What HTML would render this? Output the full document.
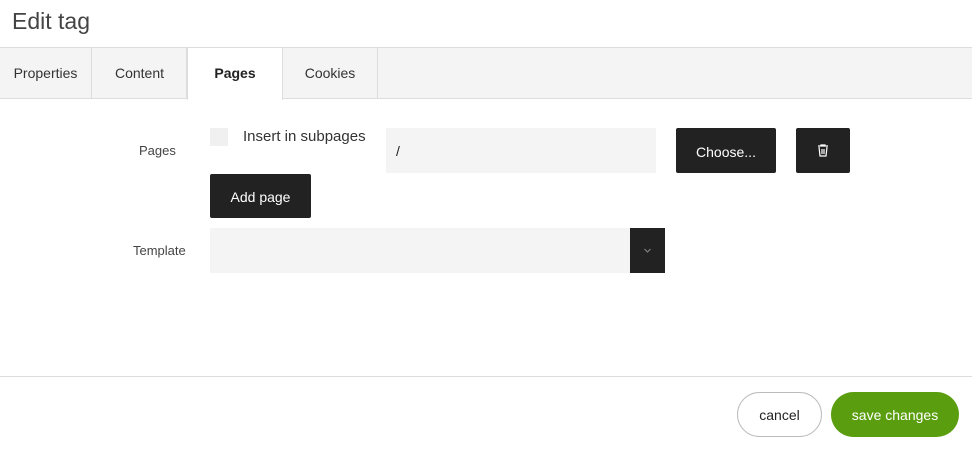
<!DOCTYPE html>
<html><head><style>
*{box-sizing:border-box;margin:0;padding:0}
body{width:972px;height:449px;background:#fff;font-family:"Liberation Sans",sans-serif;position:relative;overflow:hidden;color:#222}
.a{position:absolute}
.tab{position:absolute;top:48px;height:50px;background:#f4f4f4;border-right:1px solid #ddd;font-size:14px;color:#333;line-height:50px;text-align:center}
.btn{position:absolute;background:#222;color:#fff;border-radius:2px;font-size:14px;text-align:center}
</style></head><body>
<div class="a" style="left:12px;top:8px;font-size:23px;color:#444">Edit tag</div>
<div class="a" style="left:0;top:47px;width:972px;height:52px;background:#f4f4f4;border-top:1px solid #ddd;border-bottom:1px solid #ddd"></div>
<div class="tab" style="left:0;width:92px">Properties</div>
<div class="tab" style="left:93px;width:94px">Content</div>
<div class="tab" style="left:187px;width:96px;background:#fff;height:52px;font-weight:bold;color:#222;border-left:1px solid #ddd">Pages</div>
<div class="tab" style="left:283px;width:95px">Cookies</div>
<div class="a" style="left:139px;top:143px;font-size:13px;color:#444">Pages</div>
<div class="a" style="left:210px;top:128px;width:18px;height:18px;background:#f0f0f0"></div>
<div class="a" style="left:243px;top:128px;font-size:15px;color:#333">Insert in subpages</div>
<div class="a" style="left:386px;top:128px;width:270px;height:45px;background:#f4f4f4;padding:15px 10px;font-size:14px">/</div>
<div class="btn" style="left:676px;top:128px;width:100px;height:45px;line-height:48px">Choose...</div>
<div class="btn" style="left:796px;top:128px;width:54px;height:45px">
<svg class="a" style="left:21px;top:16px" width="12" height="13" viewBox="0 0 12 13" fill="none" stroke="#fff" stroke-width="1.2"><path d="M1 2h10M4 2V1h4v1M2 3l1 9h6l1-9M5 5v5M7 5v5"/></svg></div>
<div class="btn" style="left:210px;top:174px;width:101px;height:44px;line-height:46px">Add page</div>
<div class="a" style="left:133px;top:243px;font-size:13px;color:#444">Template</div>
<div class="a" style="left:210px;top:228px;width:420px;height:45px;background:#f4f4f4"></div>
<div class="btn" style="left:630px;top:228px;width:35px;height:45px;border-radius:0">
<svg class="a" style="left:14px;top:20px" width="7" height="5" viewBox="0 0 7 5" fill="none" stroke="#888"><path d="M0.5 1l3 3 3-3"/></svg></div>
<div class="a" style="left:0;top:376px;width:972px;height:1px;background:#ddd"></div>
<div class="a" style="left:737px;top:392px;width:85px;height:45px;border:1px solid #bbb;border-radius:23px;text-align:center;line-height:45px;font-size:14px">cancel</div>
<div class="a" style="left:831px;top:392px;width:128px;height:45px;background:#5a9e0f;border-radius:23px;text-align:center;line-height:47px;font-size:14px;color:#fff">save changes</div>
</body></html>
